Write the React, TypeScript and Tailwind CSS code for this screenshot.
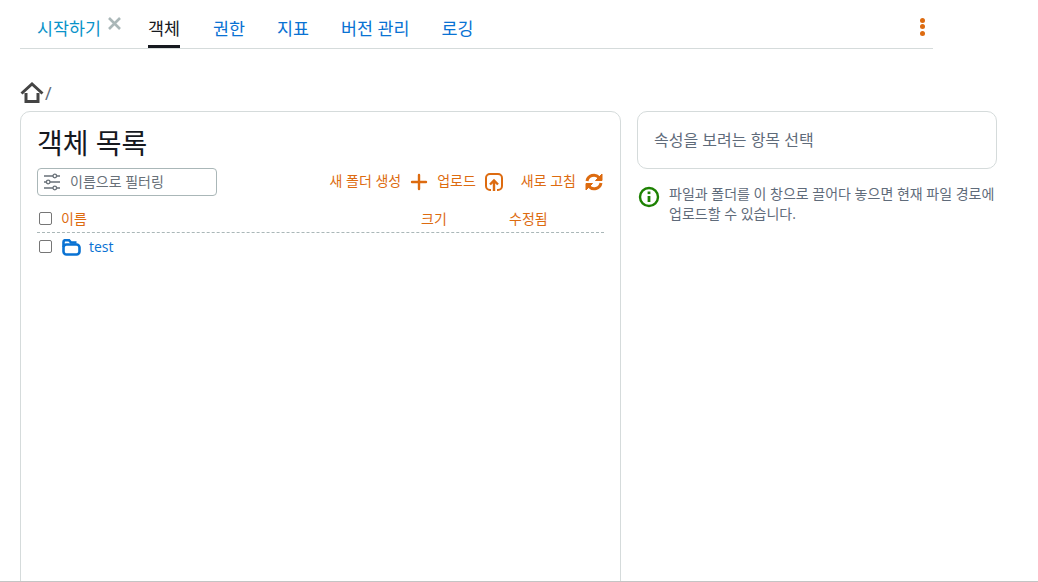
import { Plus } from "lucide-react";

const fontStack = "font-['Open_Sans','Noto_Sans_CJK_KR',sans-serif]";

const tabs = ["권한", "지표", "버전 관리", "로깅"];

const HomeIcon = () => (
  <svg width="24" height="22" viewBox="0 0 24 22" fill="none" stroke="#444444" strokeWidth="3">
    <path d="M1.500 11.500 12 2l10.500 9.500" />
    <path d="M6 11v8.500h12V11" />
  </svg>
);

const FilterIcon = () => (
  <svg width="18" height="18" viewBox="0 0 18 18" fill="none" stroke="#687078" strokeWidth="1.300">
    <path d="M1 3h9M13.500 3H17M1 9h2.500M7 9h10M1 15h9M13.500 15H17" />
    <circle cx="11.800" cy="3" r="1.800" />
    <circle cx="5.200" cy="9" r="1.800" />
    <circle cx="11.800" cy="15" r="1.800" />
  </svg>
);

const UploadIcon = () => (
  <svg width="18" height="18" viewBox="0 0 18 18" fill="none" stroke="#dd6b10" strokeWidth="2">
    <path d="M6 17H5a4 4 0 0 1-4-4V5a4 4 0 0 1 4-4h8a4 4 0 0 1 4 4v8a4 4 0 0 1-4 4h-1" />
    <path d="M9 18V8M5 11.500 9 7.500l4 4" strokeWidth="2.400" />
  </svg>
);

const RefreshIcon = () => (
  <svg width="18" height="18" viewBox="0 0 18 18" fill="none" stroke="#dd6b10" strokeWidth="3">
    <path d="M2 8a7 7 0 0 1 12-3.500L15.500 6" />
    <path d="M16 10a7 7 0 0 1-12 3.500L2.500 12" />
    <path d="M17 1v6.500h-6.500z" fill="#dd6b10" strokeWidth="1" />
    <path d="M1 17v-6.500h6.500z" fill="#dd6b10" strokeWidth="1" />
  </svg>
);

const FolderIcon = () => (
  <svg width="19" height="17" viewBox="0 0 19 17" fill="none" stroke="#0972d3" strokeWidth="2.600">
    <path d="M1.500 8V3c0-1 .6-1.800 1.800-1.800h3.700L9 3.500h5.500" />
    <rect x="1.500" y="5.500" width="16" height="10" rx="3" />
  </svg>
);

const InfoIcon = () => (
  <svg width="22" height="22" viewBox="0 0 22 22" fill="none" stroke="#1d8102" strokeWidth="2.400">
    <circle cx="11" cy="11" r="9" />
    <path d="M11 10v6" strokeWidth="2.800" />
    <path d="M11 5.500v2.600" strokeWidth="2.800" />
  </svg>
);

const Checkbox = () => (
  <span className="block h-[13px] w-[13px] rounded-[2px] border border-[#767676] bg-white" />
);

export default function App() {
  return (
    <div className={`${fontStack} h-[582px] overflow-hidden border-b border-[#c4c4c4] bg-white pl-5`}>
      <div className="flex h-[49px] w-[913px] items-end border-b border-[#d5dbdb] text-[17.400px] leading-6">
        <div className="flex h-full items-start pt-4 pl-[17px]">
          <span className="text-[#0a93c9]">시작하기</span>
          <svg className="mt-[1px] ml-[7px]" width="13" height="13" viewBox="0 0 13 13" stroke="#aab7b8" strokeWidth="2.600">
            <path d="M1 1l11 11M12 1 1 12" />
          </svg>
        </div>
        <div className="ml-[27px] flex h-full flex-col justify-between pt-4">
          <span className="text-[#16191f]">객체</span>
          <span className="block h-[3px] bg-[#16191f]" />
        </div>
        <div className="ml-[33px] flex h-full items-start gap-8 pt-4 text-[#0972d3]">
          {tabs.map((tab) => (
            <span key={tab}>{tab}</span>
          ))}
        </div>
        <div className="ml-auto mr-2 flex h-full flex-col gap-[1.300px] pt-[18px]">
          <span className="h-[5px] w-[5px] rounded-full bg-[#dd6b10]" />
          <span className="h-[5px] w-[5px] rounded-full bg-[#dd6b10]" />
          <span className="h-[5px] w-[5px] rounded-full bg-[#dd6b10]" />
        </div>
      </div>

      <div className="mt-[33px] flex h-[22px] items-end">
        <HomeIcon />
        <span className="ml-[1px] translate-y-[3px] text-lg text-[#5f6b7a]">/</span>
      </div>

      <div className="mt-[7px] flex items-start gap-4">
        <div className="h-[480px] w-[601px] rounded-t-[10px] border border-[#d5dbdb] px-4 pt-[13px]">
          <h1 className="text-[28px] leading-9 text-[#16191f]">객체 목록</h1>
          <div className="mt-[7px] flex items-center justify-between">
            <div className="flex h-7 w-[180px] items-center gap-[9px] rounded-[4px] border border-[#aab7b8] pl-[5px] text-sm text-[#687078]">
              <FilterIcon />
              <span>이름으로 필터링</span>
            </div>
            <div className="mr-[1px] flex items-center text-sm text-[#dd6b10]">
              <span className="-translate-y-[1px]">새 폴더 생성</span>
              <Plus className="mx-[6px] h-[24px] w-[24px]" strokeWidth={2.400} />
              <span className="-translate-y-[1px]">업로드</span>
              <span className="mr-[18px] ml-[9px] flex">
                <UploadIcon />
              </span>
              <span className="-translate-y-[1px]">새로 고침</span>
              <span className="ml-[9px] flex">
                <RefreshIcon />
              </span>
            </div>
          </div>
          <div className="mt-[10px] flex h-[27px] items-center border-b border-dashed border-[#aab7b8] pb-[2px] text-sm text-[#dd6b10]">
            <span className="ml-[2px] flex">
              <Checkbox />
            </span>
            <span className="ml-[9px] w-[360px] translate-y-[1px]">이름</span>
            <span className="w-[88px] translate-y-[1px]">크기</span>
            <span className="translate-y-[1px]">수정됨</span>
          </div>
          <div className="flex h-7 items-center text-sm text-[#0972d3]">
            <span className="ml-[2px] flex -translate-y-[1px]">
              <Checkbox />
            </span>
            <span className="ml-[10px] flex">
              <FolderIcon />
            </span>
            <span className="ml-[8px]">test</span>
          </div>
        </div>

        <div className="w-[360px]">
          <div className="flex h-[58px] items-center rounded-[10px] border border-[#d5dbdb] px-4 text-base text-[#5f6b7a]">
            속성을 보려는 항목 선택
          </div>
          <div className="mt-[15px] flex gap-[9px] pl-[1px]">
            <span className="mt-[2px] flex">
              <InfoIcon />
            </span>
            <p className="text-sm leading-5 text-[#5f6b7a]">
              파일과 폴더를 이 창으로 끌어다 놓으면 현재 파일 경로에 업로드할 수 있습니다.
            </p>
          </div>
        </div>
      </div>
    </div>
  );
}
